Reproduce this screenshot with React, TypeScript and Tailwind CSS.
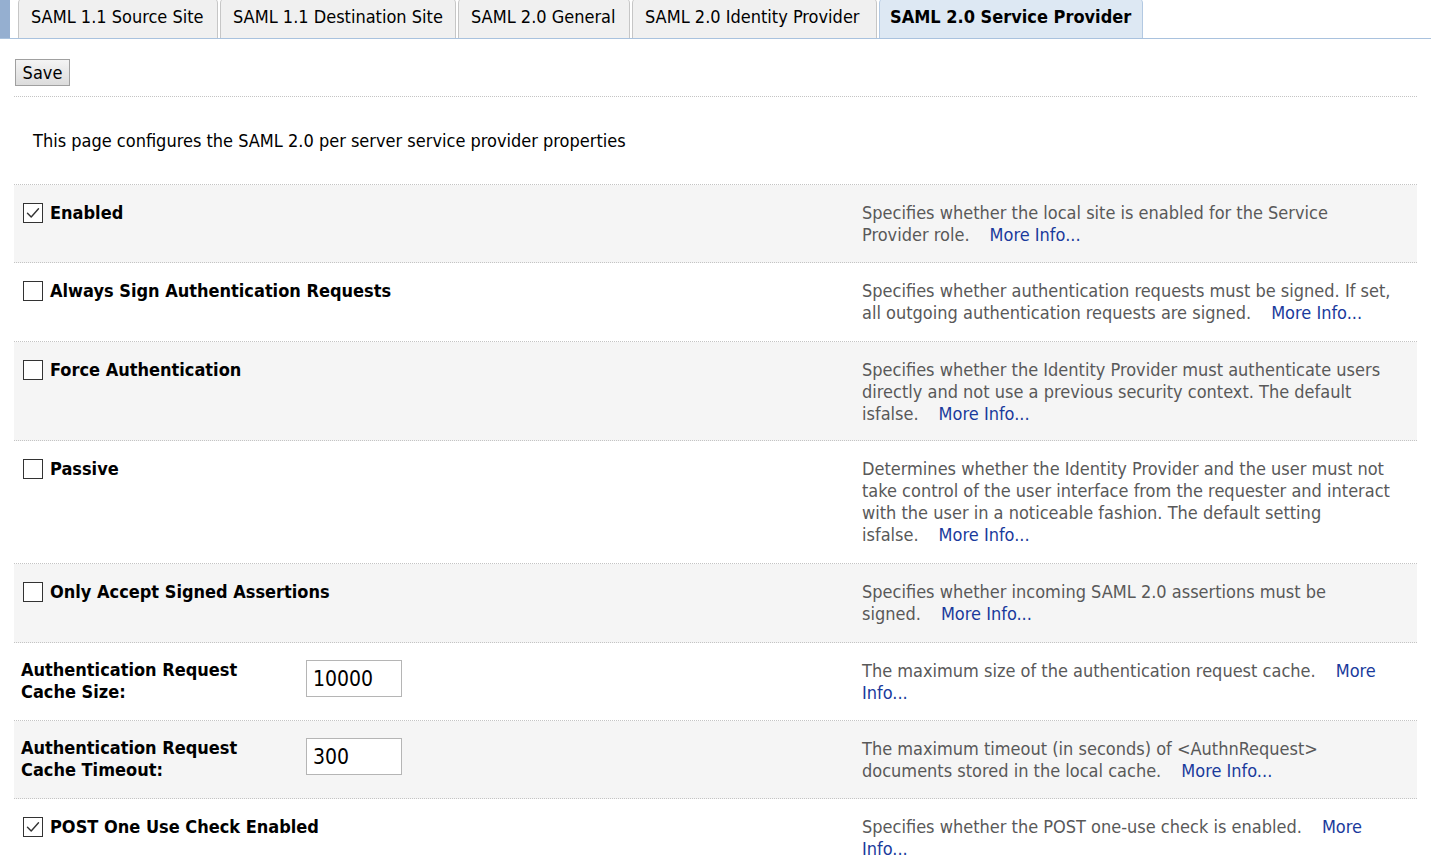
import React from "react";

const FONT = '"DejaVu Sans Condensed", "DejaVu Sans", Tahoma, sans-serif';

type Row = {
  kind: "check" | "input";
  label: string;
  checked?: boolean;
  value?: string;
  desc: string;
  pb: string;
};

const rows: Row[] = [
  { kind: "check", label: "Enabled", checked: true, pb: "pb-[16px]", desc: "Specifies whether the local site is enabled for the Service Provider role." },
  { kind: "check", label: "Always Sign Authentication Requests", pb: "pb-[17px]", desc: "Specifies whether authentication requests must be signed. If set, all outgoing authentication requests are signed." },
  { kind: "check", label: "Force Authentication", pb: "pb-[15px]", desc: "Specifies whether the Identity Provider must authenticate users directly and not use a previous security context. The default isfalse." },
  { kind: "check", label: "Passive", pb: "pb-[17px]", desc: "Determines whether the Identity Provider and the user must not take control of the user interface from the requester and interact with the user in a noticeable fashion. The default setting isfalse." },
  { kind: "check", label: "Only Accept Signed Assertions", pb: "pb-[17px]", desc: "Specifies whether incoming SAML 2.0 assertions must be signed." },
  { kind: "input", label: "Authentication Request Cache Size:", value: "10000", pb: "pb-[16px]", desc: "The maximum size of the authentication request cache." },
  { kind: "input", label: "Authentication Request Cache Timeout:", value: "300", pb: "pb-[16px]", desc: "The maximum timeout (in seconds) of <AuthnRequest> documents stored in the local cache." },
  { kind: "check", label: "POST One Use Check Enabled", checked: true, pb: "pb-[16px]", desc: "Specifies whether the POST one-use check is enabled." },
];

const tabs = [
  { name: "SAML 1.1 Source Site", w: 200 },
  { name: "SAML 1.1 Destination Site", w: 236 },
  { name: "SAML 2.0 General", w: 172 },
  { name: "SAML 2.0 Identity Provider", w: 245 },
  { name: "SAML 2.0 Service Provider", w: 264, active: true },
];

function CheckBox({ checked }: { checked?: boolean }) {
  return (
    <span className="inline-flex h-[20px] w-[20px] shrink-0 items-center justify-center border border-[#333333] bg-white">
      {checked && (
        <svg width="16" height="16" viewBox="0 0 16 16" fill="none">
          <path d="M2.5 8.2 L6.2 12 L13.5 3.8" stroke="#333333" strokeWidth="1.4" strokeLinecap="round" strokeLinejoin="round" />
        </svg>
      )}
    </span>
  );
}

function Desc({ text }: { text: string }) {
  const idx = text.lastIndexOf(" ");
  const head = text.slice(0, idx);
  const last = text.slice(idx + 1);
  return (
    <div className="text-[18px] leading-[22px] text-[#595959]">
      {head}{" "}
      <span className="whitespace-nowrap">
        {last}
        <a className="ml-[20px] text-[#1a3a9c]">More</a>
      </span>{" "}
      <a className="text-[#1a3a9c]">Info...</a>
    </div>
  );
}

export default function App() {
  return (
    <div className="min-h-[859px] w-[1431px] overflow-hidden bg-white text-black" style={{ fontFamily: FONT }}>
      {/* Tab bar */}
      <div className="flex h-[39px] items-end border-b border-[#a9c2de]">
        <div className="h-[39px] w-[10px] shrink-0 bg-[#95afd0]" />
        <div className="ml-[8px] flex h-[39px] items-end gap-[2px]">
          {tabs.map((t) => (
            <div
              key={t.name}
              className={
                t.active
                  ? "flex h-[40px] items-start rounded-t-[5px] border border-b-0 border-[#b3c9e2] bg-[#dde8f3] px-[10px] pt-[7px] text-[18px] font-bold"
                  : "flex h-[40px] items-start rounded-t-[5px] border border-b-0 border-[#c6c6c6] bg-[#f0f0f0] px-[12px] pt-[7px] text-[18px]"
              }
              style={{ width: t.w }}
            >
              <span className="whitespace-nowrap leading-[22px]">{t.name}</span>
            </div>
          ))}
        </div>
      </div>

      <div className="px-[14px]">
        <div className="border-b border-dotted border-[#c4c4c4] pb-[10px] pt-[20px]">
          <button className="ml-[1px] h-[27px] w-[55px] border border-[#a0a0a0] bg-gradient-to-b from-[#f4f4f4] to-[#dcdcdc] text-[18px] leading-[22px] text-black" style={{ fontFamily: FONT }}>
            Save
          </button>
        </div>

        <div className="border-b border-dotted border-[#c4c4c4] px-[19px] pb-[32px] pt-[33px] text-[18px] leading-[22px]">
          This page configures the SAML 2.0 per server service provider properties
        </div>

        {rows.map((r, i) => (
          <div
            key={r.label}
            className={
              "grid grid-cols-[848px_532px] border-b border-dotted border-[#c4c4c4] pt-[17px] " +
              r.pb +
              " " +
              (i % 2 === 0 ? "bg-[#f5f5f5]" : "bg-white")
            }
          >
            {r.kind === "check" ? (
              <div className="flex items-center gap-[7px] self-start pl-[9px] pt-[1px]">
                <CheckBox checked={r.checked} />
                <span className="text-[18px] font-bold leading-[20px]">{r.label}</span>
              </div>
            ) : (
              <div className="flex items-start pl-[7px]">
                <span className="-mt-[1px] w-[250px] text-[18px] font-bold leading-[22px]">{r.label}</span>
                <input
                  readOnly
                  value={r.value}
                  className="ml-[35px] h-[37px] w-[96px] border border-[#b5b5b5] bg-white px-[6px] text-[21px] text-black outline-none"
                  style={{ fontFamily: FONT }}
                />
              </div>
            )}
            <Desc text={r.desc} />
          </div>
        ))}
      </div>
    </div>
  );
}
